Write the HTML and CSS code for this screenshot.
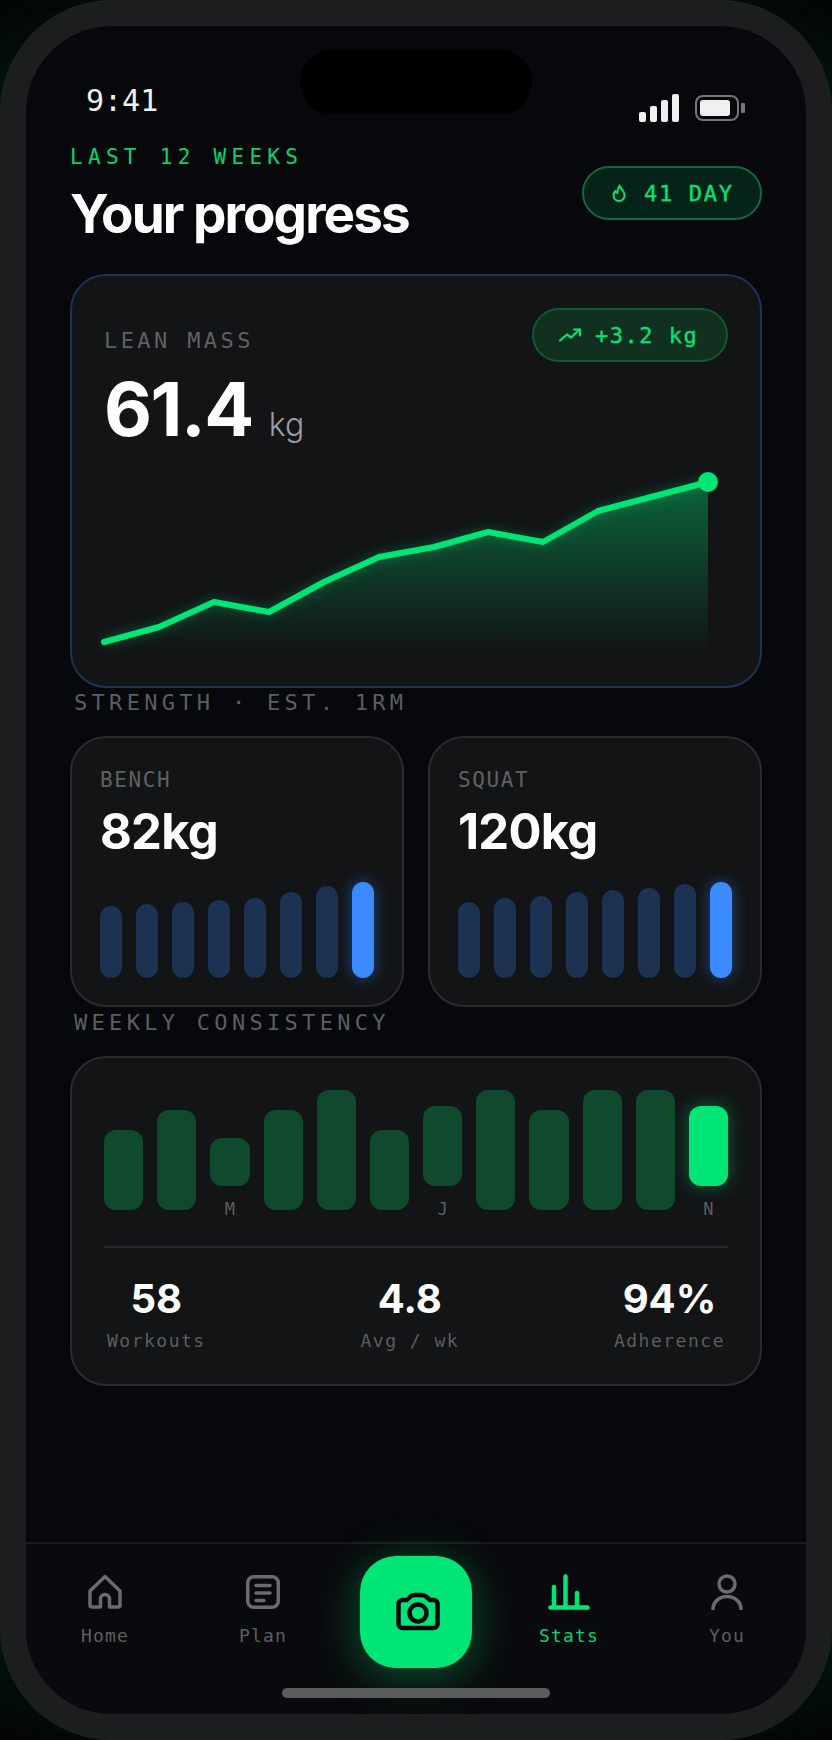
FILE: index.html
```html
<!DOCTYPE html>
<html lang="en">
<head>
  <meta charset="UTF-8">
  <meta name="viewport" content="width=device-width, initial-scale=1.0">
  <title>Your progress</title>
  <link rel="stylesheet" href="styles.css">
</head>
<body>
  <div class="phone">
    <div class="screen">
      <div class="island"></div>

      <!-- Status bar -->
      <div class="status">
        <span class="time">9:41</span>
        <div class="status-icons">
          <div class="signal">
            <span class="sig s1"></span>
            <span class="sig s2"></span>
            <span class="sig s3"></span>
            <span class="sig s4"></span>
          </div>
          <div class="battery"><span class="battery-fill"></span></div>
          <span class="battery-nub"></span>
        </div>
      </div>

      <main class="content">
        <!-- Header -->
        <header class="header">
          <div>
            <div class="eyebrow">LAST 12 WEEKS</div>
            <h1 class="title">Your progress</h1>
          </div>
          <div class="pill streak">
            <svg class="flame" viewBox="0 0 14 18" fill="none" stroke="currentColor" stroke-width="2" stroke-linejoin="round">
              <path d="M7.5 1.5c.5 3 5 5 5 10a5.5 5.5 0 0 1-11 0c0-2 .8-3.5 1.8-4.5.3 1.2 1 2 2 2 .2-2.5.6-5 2.2-7.5z"/>
            </svg>
            <span>41 DAY</span>
          </div>
        </header>

        <!-- Lean mass -->
        <section class="card lean">
          <div class="lean-head">
            <div>
              <div class="card-label lean-label">LEAN MASS</div>
              <div class="lean-value">61.4 <span class="unit">kg</span></div>
            </div>
            <div class="pill delta">
              <svg class="trend" viewBox="0 0 22 14" fill="none" stroke="currentColor" stroke-width="2.2" stroke-linecap="round" stroke-linejoin="round">
                <path d="M1 12.5 8 6.5l4 3 8.5-8"/>
                <path d="M15 1.5h6v6"/>
              </svg>
              <span>+3.2 kg</span>
            </div>
          </div>
          <svg class="chart" viewBox="0 0 624 184">
            <defs>
              <linearGradient id="areaFill" x1="0" y1="0" x2="0" y2="1">
                <stop offset="0" stop-color="#00e676" stop-opacity="0.38"/>
                <stop offset="1" stop-color="#00e676" stop-opacity="0"/>
              </linearGradient>
            </defs>
            <path d="M0 172 55 157 110 132 165 142 220 112 275 87 330 77 384 62 439 72 494 41 604 12V182H0z" fill="url(#areaFill)"/>
            <path class="chart-line" d="M0 172 55 157 110 132 165 142 220 112 275 87 330 77 384 62 439 72 494 41 604 12"/>
            <circle cx="604" cy="12" r="10" fill="#00e676"/>
          </svg>
        </section>

        <div class="section-label">STRENGTH · EST. 1RM</div>

        <!-- Strength cards -->
        <div class="lifts">
          <section class="card lift">
            <div class="card-label">BENCH</div>
            <div class="lift-value">82kg</div>
            <div class="lift-bars">
              <span class="lift-bar" style="height:72px"></span>
              <span class="lift-bar" style="height:74px"></span>
              <span class="lift-bar" style="height:76px"></span>
              <span class="lift-bar" style="height:78px"></span>
              <span class="lift-bar" style="height:80px"></span>
              <span class="lift-bar" style="height:86px"></span>
              <span class="lift-bar" style="height:92px"></span>
              <span class="lift-bar now" style="height:96px"></span>
            </div>
          </section>
          <section class="card lift">
            <div class="card-label">SQUAT</div>
            <div class="lift-value">120kg</div>
            <div class="lift-bars">
              <span class="lift-bar" style="height:76px"></span>
              <span class="lift-bar" style="height:80px"></span>
              <span class="lift-bar" style="height:82px"></span>
              <span class="lift-bar" style="height:86px"></span>
              <span class="lift-bar" style="height:88px"></span>
              <span class="lift-bar" style="height:90px"></span>
              <span class="lift-bar" style="height:94px"></span>
              <span class="lift-bar now" style="height:96px"></span>
            </div>
          </section>
        </div>

        <div class="section-label">WEEKLY CONSISTENCY</div>

        <!-- Weekly consistency -->
        <section class="card weekly">
          <div class="weeks">
            <div class="week"><span class="week-bar" style="height:80px"></span></div>
            <div class="week"><span class="week-bar" style="height:100px"></span></div>
            <div class="week"><span class="week-bar" style="height:48px"></span><span class="week-label">M</span></div>
            <div class="week"><span class="week-bar" style="height:100px"></span></div>
            <div class="week"><span class="week-bar" style="height:120px"></span></div>
            <div class="week"><span class="week-bar" style="height:80px"></span></div>
            <div class="week"><span class="week-bar" style="height:80px"></span><span class="week-label">J</span></div>
            <div class="week"><span class="week-bar" style="height:120px"></span></div>
            <div class="week"><span class="week-bar" style="height:100px"></span></div>
            <div class="week"><span class="week-bar" style="height:120px"></span></div>
            <div class="week"><span class="week-bar" style="height:120px"></span></div>
            <div class="week"><span class="week-bar now" style="height:80px"></span><span class="week-label">N</span></div>
          </div>
          <div class="totals">
            <div class="total"><div class="total-value">58</div><div class="total-label">Workouts</div></div>
            <div class="total"><div class="total-value">4.8</div><div class="total-label">Avg / wk</div></div>
            <div class="total"><div class="total-value">94%</div><div class="total-label">Adherence</div></div>
          </div>
        </section>
      </main>

      <!-- Tab bar -->
      <nav class="tabs">
        <a class="tab">
          <svg class="tab-icon" width="36" height="36" viewBox="0 0 36 36">
            <path d="M13.5 33H5a2 2 0 0 1-2-2V17L18 2.5 33 17v14a2 2 0 0 1-2 2h-8.5v-8a4.5 4.5 0 0 0-9 0z"/>
          </svg>
          <span>Home</span>
        </a>
        <a class="tab">
          <svg class="tab-icon" width="36" height="36" viewBox="0 0 36 36">
            <rect x="2.75" y="2.75" width="30.5" height="30.5" rx="6"/>
            <path d="M11 11.5h14M11 19h14M11 26.5h8"/>
          </svg>
          <span>Plan</span>
        </a>
        <button class="shutter">
          <svg class="shutter-icon" width="44" height="38" viewBox="-2 1 44 38">
            <path d="M2.5 12a4 4 0 0 1 4-4H11l3.500-3.500Q16 3 18.500 3h7Q28 3 30 4.500L34 8h3.500a4 4 0 0 1 4 4v20a4 4 0 0 1-4 4h-31a4 4 0 0 1-4-4z"/>
            <circle cx="22" cy="21" r="8.5"/>
          </svg>
        </button>
        <a class="tab active">
          <svg class="tab-icon" width="42" height="36" viewBox="0 0 42 36">
            <path d="M2.5 33.5h37M6 33.5V13M17.5 33.5V2.5M29 33.5V19"/>
          </svg>
          <span>Stats</span>
        </a>
        <a class="tab">
          <svg class="tab-icon" width="32" height="36" viewBox="0 0 32 36">
            <circle cx="16" cy="10" r="8"/>
            <path d="M2 35a14 12.5 0 0 1 28 0"/>
          </svg>
          <span>You</span>
        </a>
      </nav>

      <div class="home-bar"></div>
    </div>
  </div>
</body>
</html>
```

FILE: styles.css
```css
/* Global Reset */
* {
  margin: 0;
  padding: 0;
  box-sizing: border-box;
}

body {
  width: 832px;
  height: 1740px;
  overflow: hidden;
  background: radial-gradient(circle at center, #06241a 80%, #020403 100%);
  font-family: "DejaVu Sans Mono", monospace;
  color: #fff;
}

/* Phone shell */
.phone {
  width: 832px;
  height: 1740px;
  padding: 24px;
  background: #1c1d1f;
  border: 2px solid #1a201e;
  border-radius: 112px;
}

.screen {
  position: relative;
  display: flex;
  flex-direction: column;
  height: 1688px;
  background: #07080b;
  border-radius: 86px;
  overflow: hidden;
}

.island {
  position: absolute;
  top: 24px;
  left: 274px;
  width: 232px;
  height: 64px;
  background: #000;
  border-radius: 32px;
}

/* Status bar */
.status {
  display: flex;
  justify-content: space-between;
  height: 116px;
  padding: 57px 61px 0 60px;
}

.time {
  font-size: 30px;
  line-height: 36px;
  color: #eef1f0;
}

.status-icons {
  display: flex;
  align-items: center;
  height: 28px;
  margin-top: 11px;
}

.signal {
  display: flex;
  align-items: flex-end;
  gap: 4px;
  height: 28px;
  margin-right: 16px;
}

.sig {
  width: 7px;
  background: #eef1f0;
  border-radius: 2px;
}

.s1 { height: 10px; }
.s2 { height: 16px; }
.s3 { height: 22px; }
.s4 { height: 28px; }

.battery {
  width: 44px;
  height: 26px;
  padding: 3px;
  border: 2px solid #777;
  border-radius: 8px;
}

.battery-fill {
  display: block;
  width: 30px;
  height: 16px;
  background: #eef1f0;
  border-radius: 3px;
}

.battery-nub {
  width: 4px;
  height: 10px;
  margin-left: 2px;
  background: #777;
  border-radius: 1px;
}

/* Main content */
.content {
  flex: 1;
  padding: 0 44px;
}

.header {
  display: flex;
  justify-content: space-between;
  align-items: center;
  margin-bottom: 25px;
}

.eyebrow {
  margin-top: 2px;
  font-size: 21px;
  line-height: 26px;
  letter-spacing: 5.3px;
  color: #00d66e;
}

.title {
  margin-top: 9px;
  font-family: Inter, sans-serif;
  font-size: 53px;
  font-weight: 700;
  line-height: 70px;
  letter-spacing: -1.9px;
  color: #fff;
}

.pill {
  display: flex;
  align-items: center;
  color: #00e676;
  border-radius: 28px;
  -webkit-text-stroke: 0.3px currentColor;
}

.streak {
  gap: 18px;
  width: 180px;
  height: 54px;
  margin-bottom: 5px;
  padding-left: 28px;
  font-size: 22px;
  letter-spacing: 1.7px;
  background: #06231a;
  border: 2px solid #0b6b3c;
}

.flame {
  width: 14px;
  height: 18px;
}

.delta {
  gap: 14px;
  width: 196px;
  height: 54px;
  padding-left: 25px;
  font-size: 22px;
  letter-spacing: 1.5px;
  background: #12301f;
  border: 2px solid #0f5a33;
}

.trend {
  width: 22px;
  height: 14px;
}

/* Cards */
.card {
  background: #121416;
  border: 2px solid #2a2b2d;
  border-radius: 36px;
}

.card-label {
  font-size: 21px;
  line-height: 24px;
  letter-spacing: 1.6px;
  color: #5f6164;
}

.lean {
  height: 414px;
  padding: 32px;
  border-color: #1e3354;
}

.lean-head {
  display: flex;
  justify-content: space-between;
  align-items: flex-start;
}

.lean-label {
  margin-top: 21px;
  font-size: 22px;
  letter-spacing: 3.4px;
}

.lean-value {
  margin-top: 14px;
  font-family: Inter, sans-serif;
  font-size: 74px;
  font-weight: 700;
  line-height: 84px;
  letter-spacing: -1.5px;
}

.unit {
  font-size: 32px;
  font-weight: 300;
  line-height: 1;
  letter-spacing: 0;
  color: #9a9c9e;
}

.chart {
  display: block;
  width: 624px;
  height: 184px;
  margin-top: 19px;
  overflow: visible;
}

.chart-line {
  fill: none;
  stroke: #00e676;
  stroke-width: 6;
  stroke-linecap: round;
  stroke-linejoin: round;
  filter: drop-shadow(0 0 6px rgba(0, 230, 118, 0.35));
}

.section-label {
  padding-left: 4px;
  font-size: 22px;
  line-height: 30px;
  letter-spacing: 4.3px;
  color: #5c5e60;
}

/* Strength */
.lifts {
  display: flex;
  gap: 24px;
  margin: 18px 0 1px;
}

.lift {
  flex: 1;
  height: 271px;
  padding: 30px 28px 0;
}

.lift-value {
  margin-top: 10px;
  font-family: Inter, sans-serif;
  font-size: 49px;
  font-weight: 700;
  line-height: 60px;
  letter-spacing: -0.8px;
}

.lift-bars {
  display: flex;
  align-items: flex-end;
  gap: 14px;
  height: 96px;
  margin-top: 20px;
}

.lift-bar {
  flex: 1;
  background: #1b3252;
  border-radius: 11px;
}

.lift-bar.now {
  background: #3b8bff;
  box-shadow: 0 0 16px rgba(59, 139, 255, 0.45);
}

/* Weekly consistency */
.weekly {
  height: 330px;
  margin-top: 18px;
  padding: 32px;
}

.weeks {
  display: flex;
  align-items: flex-end;
  gap: 14px;
  height: 132px;
}

.week {
  flex: 1;
  display: flex;
  flex-direction: column;
  align-items: center;
  padding-bottom: 12px;
}

.week:has(.week-label) {
  padding-bottom: 0;
}

.week-bar {
  width: 100%;
  background: #104a2e;
  border-radius: 12px;
}

.week-bar.now {
  background: #00e676;
  box-shadow: 0 0 18px rgba(0, 230, 118, 0.4);
}

.week-label {
  height: 36px;
  padding-top: 11px;
  font-size: 17px;
  line-height: 25px;
  color: #5c5e60;
}

.totals {
  display: flex;
  justify-content: space-between;
  margin-top: 24px;
  padding: 27px 3px 0;
  border-top: 2px solid #24262a;
}

.total {
  text-align: center;
}

.total-value {
  font-family: Inter, sans-serif;
  font-size: 40px;
  font-weight: 700;
  line-height: 48px;
  color: #fff;
}

.total-label {
  margin-top: 5px;
  font-size: 18px;
  line-height: 26px;
  letter-spacing: 1.5px;
  color: #5c5e60;
}

/* Tab bar */
.tabs {
  display: flex;
  align-items: flex-start;
  height: 172px;
  background: #090a0d;
  border-top: 2px solid #1a1b1e;
}

.tab {
  flex: 1;
  display: flex;
  flex-direction: column;
  align-items: center;
  padding-top: 30px;
  font-size: 18px;
  letter-spacing: 1.2px;
  color: #5c5e60;
}

.tab span {
  margin-top: 14px;
  line-height: 24px;
}

.tab-icon {
  fill: none;
  stroke: #6a6b6d;
  stroke-width: 3.5;
  stroke-linecap: round;
  stroke-linejoin: round;
}

.tab.active {
  color: #00d66e;
}

.tab.active .tab-icon {
  stroke: #00e676;
  stroke-width: 4.5;
}

.shutter {
  display: flex;
  align-items: center;
  justify-content: center;
  flex: none;
  width: 112px;
  height: 112px;
  margin: 12px 18px 0;
  background: #00e676;
  border: none;
  border-radius: 36px;
  box-shadow: 0 8px 44px rgba(0, 230, 118, 0.35);
}

.shutter-icon {
  fill: none;
  stroke: #06070a;
  stroke-width: 4.5;
  stroke-linejoin: round;
  overflow: visible;
}

.home-bar {
  position: absolute;
  left: 256px;
  bottom: 16px;
  width: 268px;
  height: 10px;
  background: #5a5c5c;
  border-radius: 5px;
}
```
